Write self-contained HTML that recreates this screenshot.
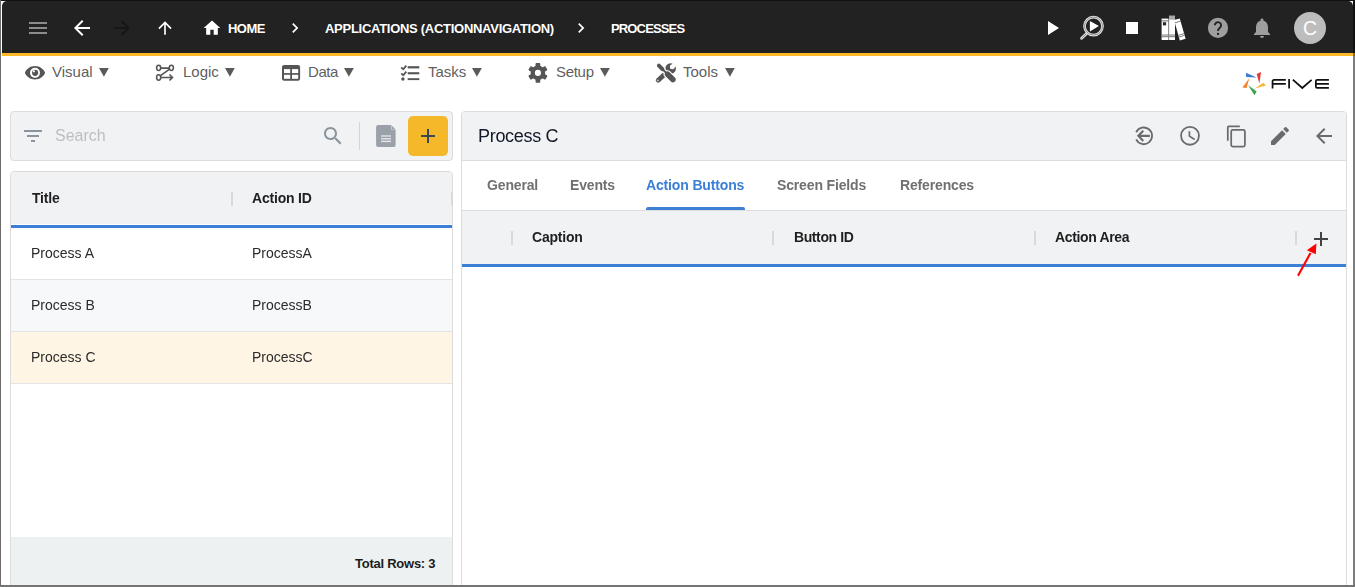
<!DOCTYPE html>
<html><head><meta charset="utf-8">
<style>
*{box-sizing:border-box;margin:0;padding:0}
html,body{width:1355px;height:587px;overflow:hidden;background:#fff;font-family:"Liberation Sans",sans-serif}
.a{position:absolute}
svg{position:absolute;overflow:visible}
.hdr{left:2px;top:1px;width:1351px;height:52px;background:#222;border-radius:5px 5px 0 0}
.org{left:2px;top:53px;width:1351px;height:3px;background:#fbb928}
.crumb{color:#fff;font-weight:bold;font-size:13px;top:22px;line-height:14px;white-space:nowrap}
.menu{color:#5f5f5f;font-size:15px;top:64px;line-height:16px;white-space:nowrap}
.tri{color:#5f5f5f;font-size:11px}
.panel{background:#fff;border:1px solid #dcdcdc;border-radius:4px}
.gs{will-change:transform}
.th{font-weight:bold;font-size:14px;color:#1f1f1f;line-height:16px;white-space:nowrap;letter-spacing:-0.2px}
.td{font-size:14px;color:#2b2b2b;line-height:16px;white-space:nowrap}
.tab{font-weight:bold;font-size:14px;color:#707070;line-height:16px;white-space:nowrap;letter-spacing:-0.15px;top:177.4px}
.dv{width:2px;background:#dadada}
</style></head><body>

<!-- HEADER -->
<div class="a hdr"></div>
<div class="a org"></div>


<!-- header content -->
<svg class="a" style="left:0;top:0" width="60" height="53"><rect x="29" y="22" width="18" height="2" fill="#8c8c8c"/><rect x="29" y="27" width="18" height="2" fill="#8c8c8c"/><rect x="29" y="32" width="18" height="2" fill="#8c8c8c"/></svg>
<svg class="a" style="left:70px;top:16px" width="24" height="24" viewBox="0 0 24 24"><path fill="#fff" d="M20 11H7.83l5.59-5.59L12 4l-8 8 8 8 1.41-1.41L7.83 13H20v-2z"/></svg>
<svg class="a" style="left:110px;top:16px" width="24" height="24" viewBox="0 0 24 24"><path fill="#161616" d="M12 4l-1.41 1.41L16.17 11H4v2h12.17l-5.58 5.59L12 20l8-8z"/></svg>
<svg class="a" style="left:155px;top:18px" width="20" height="20" viewBox="0 0 24 24"><path fill="#fff" d="M4 12l1.41 1.41L11 7.83V20h2V7.83l5.58 5.59L20 12l-8-8-8 8z"/></svg>
<svg class="a" style="left:202px;top:18px" width="20" height="20" viewBox="0 0 24 24"><path fill="#fff" d="M10 20v-6h4v6h5v-8h3L12 3 2 12h3v8z"/></svg>
<div class="a crumb" id="c1" style="left:228px;letter-spacing:-0.55px">HOME</div>
<svg class="a" style="left:285px;top:18px" width="20" height="20" viewBox="0 0 24 24"><path fill="#fff" d="M10 6L8.59 7.41 13.17 12l-4.58 4.59L10 18l6-6z"/></svg>
<div class="a crumb" id="c2" style="left:325px;letter-spacing:-0.28px">APPLICATIONS (ACTIONNAVIGATION)</div>
<svg class="a" style="left:571px;top:18px" width="20" height="20" viewBox="0 0 24 24"><path fill="#fff" d="M10 6L8.59 7.41 13.17 12l-4.58 4.59L10 18l6-6z"/></svg>
<div class="a crumb" id="c3" style="left:611px;letter-spacing:-0.85px">PROCESSES</div>

<svg class="a" style="left:1040px;top:16px" width="24" height="24" viewBox="0 0 24 24"><path fill="#fff" d="M8 5v14l11-7z"/></svg>
<svg class="a" style="left:1075px;top:12px" width="32" height="32"><path d="M6.6 26.2L11.9 21.2" stroke="#e6e6e6" stroke-width="2.9" stroke-linecap="round"/><path d="M6.6 26.2L11.9 21.2" stroke="#777" stroke-width="0.9" stroke-linecap="round"/><circle cx="18.5" cy="14.1" r="9" fill="none" stroke="#e6e6e6" stroke-width="2.7"/><circle cx="18.5" cy="14.1" r="9" fill="none" stroke="#7a7a7a" stroke-width="0.8"/><path d="M14.9 9L23.9 14.1 14.9 19.5z" fill="#fff"/></svg>
<div class="a" style="left:1126px;top:22px;width:12px;height:12px;background:#fff"></div>
<svg class="a" style="left:1160px;top:15px" width="28" height="27" viewBox="0 0 28 27">
<rect x="1.6" y="3.6" width="6.9" height="21.4" fill="#fff"/>
<rect x="2.9" y="7.2" width="3.2" height="3.2" fill="#2a2a2a"/>
<rect x="1.6" y="5.5" width="6.9" height="0.8" fill="#444"/>
<rect x="1.6" y="19.6" width="6.9" height="0.9" fill="#666"/>
<rect x="1.6" y="21.3" width="6.9" height="0.9" fill="#666"/>
<rect x="9.1" y="0.8" width="5.9" height="24.2" fill="#fff"/>
<rect x="9.1" y="0.8" width="5.9" height="3.9" fill="#a8a8a8"/>
<rect x="9.1" y="19.6" width="5.9" height="0.9" fill="#666"/>
<rect x="9.1" y="21.3" width="5.9" height="0.9" fill="#666"/>
<g transform="rotate(-16 20 14)"><rect x="16.7" y="3.8" width="6" height="21.1" fill="#fff"/><rect x="16.7" y="6.2" width="6" height="0.9" fill="#666"/><rect x="16.7" y="19.2" width="6" height="0.9" fill="#666"/><rect x="16.7" y="21" width="6" height="0.9" fill="#666"/></g>
</svg>
<svg class="a" style="left:1206px;top:16px" width="24" height="24"><circle cx="12" cy="11.9" r="10.1" fill="#9e9e9e"/><path d="M8.9 9.3a3.1 3.1 0 1 1 4.9 2.5c-1.1.8-1.8 1.4-1.8 3.3" fill="none" stroke="#222" stroke-width="1.9"/><rect x="11" y="16.9" width="2" height="2" fill="#222"/></svg>
<svg class="a" style="left:1250px;top:15.5px" width="24" height="24" viewBox="0 0 24 24"><path fill="#9e9e9e" d="M12 22c1.1 0 2-.9 2-2h-4c0 1.1.89 2 2 2zm6-6v-5c0-3.07-1.64-5.64-4.5-6.32V4c0-.83-.67-1.5-1.5-1.5s-1.5.67-1.5 1.5v.68C7.63 5.36 6 7.92 6 11v5l-2 2v1h16v-1l-2-2z"/></svg>
<div class="a" style="left:1294px;top:12px;width:32px;height:32px;border-radius:50%;background:#bdbdbd;color:#fff;font-size:19.5px;line-height:32px;text-align:center">C</div>


<!-- toolbar -->
<svg class="a" style="left:23px;top:61px" width="24" height="24" viewBox="0 0 24 24"><path fill="#555" fill-rule="evenodd" d="M12 5.1C7.3 5.1 3.4 8 1.9 11.85 3.4 15.7 7.3 18.6 12 18.6s8.6-2.9 10.1-6.75C20.6 8 16.7 5.1 12 5.1zM12 16.85a5 5 0 1 1 0-10 5 5 0 0 1 0 10z"/><circle cx="12.1" cy="11.85" r="3.1" fill="#555"/><circle cx="10.9" cy="10.3" r="1.1" fill="#fff"/></svg>
<div class="a menu" id="m1" style="left:52px">Visual</div>
<svg class="a" style="left:99px;top:68px" width="11" height="10"><path d="M0 0H9.8L4.9 8.7z" fill="#5a5a5a"/></svg>

<svg class="a" style="left:150px;top:60px" width="30" height="26" fill="none" stroke="#555" stroke-width="1.55"><ellipse cx="8.65" cy="7.85" rx="2.05" ry="2.7"/><ellipse cx="21.35" cy="7.85" rx="2.05" ry="2.7"/><ellipse cx="8.65" cy="17.5" rx="2.05" ry="2.7"/><path d="M10.5 8.1H19.5M10.6 15.6L19.2 9.4M10.5 17.4H22.4M19.5 14.5L22.5 17.4 19.5 20.5"/></svg>
<div class="a menu" id="m2" style="left:183px">Logic</div>
<svg class="a" style="left:224.5px;top:68px" width="11" height="10"><path d="M0 0H9.8L4.9 8.7z" fill="#5a5a5a"/></svg>

<svg class="a" style="left:276px;top:60px" width="30" height="26"><rect x="6" y="4.9" width="18.1" height="15.9" rx="2.2" fill="#555"/><rect x="8" y="9.1" width="6.2" height="4" fill="#fff"/><rect x="16" y="9.1" width="6.2" height="4" fill="#fff"/><rect x="8" y="14.8" width="6.2" height="4" fill="#fff"/><rect x="16" y="14.8" width="6.2" height="4" fill="#fff"/></svg>
<div class="a menu" id="m3" style="left:308px;letter-spacing:-0.45px">Data</div>
<svg class="a" style="left:344px;top:68px" width="11" height="10"><path d="M0 0H9.8L4.9 8.7z" fill="#5a5a5a"/></svg>

<svg class="a" style="left:396px;top:60px" width="30" height="26"><path d="M5.2 7.3L7.3 9.3 10.3 5.6M5.2 13.3L7.3 15.3 10.3 11.6" fill="none" stroke="#555" stroke-width="1.8"/><circle cx="6.9" cy="19" r="1.7" fill="#555"/><rect x="11.7" y="6.2" width="11.6" height="2.2" fill="#555"/><rect x="11.7" y="12.2" width="11.6" height="2.1" fill="#555"/><rect x="11.7" y="18.2" width="11.6" height="1.9" fill="#555"/></svg>
<div class="a menu" id="m4" style="left:428px">Tasks</div>
<svg class="a" style="left:472px;top:68px" width="11" height="10"><path d="M0 0H9.8L4.9 8.7z" fill="#5a5a5a"/></svg>

<svg class="a" style="left:524px;top:60px" width="30" height="26"><g transform="translate(13.9 12.9)" fill="#555"><circle r="7.3"/><rect x="-2.35" y="-9.8" width="4.7" height="19.6" rx="0.8"/><rect x="-2.35" y="-9.8" width="4.7" height="19.6" rx="0.8" transform="rotate(60)"/><rect x="-2.35" y="-9.8" width="4.7" height="19.6" rx="0.8" transform="rotate(120)"/><circle r="3.05" fill="#fff"/></g></svg>
<div class="a menu" id="m5" style="left:556px;letter-spacing:-0.3px">Setup</div>
<svg class="a" style="left:599.5px;top:68px" width="11" height="10"><path d="M0 0H9.8L4.9 8.7z" fill="#5a5a5a"/></svg>

<svg class="a" style="left:652px;top:60px" width="30" height="26"><g stroke-linecap="round"><path d="M16.8 10.4L6.2 20.2" stroke="#555" stroke-width="4.8"/><circle cx="18.6" cy="8.5" r="5.3" fill="#555"/><circle cx="20.2" cy="6.9" r="2.4" fill="#fff"/><path d="M20.2 6.9L24.5 2.6" stroke="#fff" stroke-width="4.2" stroke-linecap="butt"/><path d="M6.9 5.6L10.4 9.1" stroke="#fff" stroke-width="6.2"/><path d="M9.8 8.5L15.2 13.9" stroke="#fff" stroke-width="4.2" stroke-linecap="butt"/><path d="M15.6 14.3L20.9 19.6" stroke="#fff" stroke-width="7.8"/><path d="M6.9 5.6L10.4 9.1" stroke="#555" stroke-width="4"/><path d="M9.8 8.5L15.2 13.9" stroke="#555" stroke-width="2" stroke-linecap="butt"/><path d="M15.6 14.3L20.9 19.6" stroke="#555" stroke-width="5.6"/><path d="M16.8 10.4L13.6 13.4" stroke="#fff" stroke-width="0" /></g><circle cx="5.9" cy="20.4" r="0.9" fill="#ccc"/></svg>
<div class="a menu" id="m6" style="left:683px">Tools</div>
<svg class="a" style="left:725px;top:68px" width="11" height="10"><path d="M0 0H9.8L4.9 8.7z" fill="#5a5a5a"/></svg>

<!-- FIVE logo -->
<svg class="a" style="left:1235px;top:65px" width="105" height="35">
<path d="M10.9 7.8L11.2 12 21.7 12.4z" fill="#3b7bd8"/>
<path d="M21.7 8.9L26 7 24.4 18.6z" fill="#e03a3a"/>
<path d="M19.8 23.6L28.3 17.8 31 20.5z" fill="#f5b82e"/>
<path d="M13.2 20.2L21.7 26.4 19.4 30.2z" fill="#3ea54f"/>
<path d="M14.3 13.2L7.4 22.5 11.6 22.9z" fill="#f5832a"/>
<g fill="none" stroke="#111" stroke-width="1.75">
<path d="M37.55 23.6V16.3a1.35 1.35 0 0 1 1.35-1.35H50.8M37.55 18.85H50.8"/>
<path d="M54.1 14.1V23.6M57.8 14.6L67.3 23 76.6 14.8"/>
<path d="M93.9 14.95H82.2a1.35 1.35 0 0 0-1.35 1.35V21.4a1.35 1.35 0 0 0 1.35 1.35H93.9M80.85 18.85H93.9"/>
</g>
</svg>


<!-- LEFT: search -->
<div class="a" style="left:10px;top:111px;width:443px;height:50px;background:#f1f2f4;border:1px solid #dcdcdc;border-radius:4px"></div>
<svg class="a" style="left:21px;top:124px" width="24" height="24" viewBox="0 0 24 24"><path fill="#8b949c" d="M10 18h4v-2h-4v2zM3 6v2h18V6H3zm3 7h12v-2H6v2z"/></svg>
<div class="a gs" id="s1" style="left:55px;top:127px;font-size:16px;line-height:18px;color:#bcbec1">Search</div>
<svg class="a" style="left:321px;top:124px" width="24" height="24" viewBox="0 0 24 24"><path fill="#8b949c" d="M15.5 14h-.79l-.28-.27C15.41 12.59 16 11.11 16 9.5 16 5.91 13.09 3 9.5 3S3 5.91 3 9.5 5.91 16 9.5 16c1.61 0 3.09-.59 4.23-1.57l.27.28v.79l5 4.99L20.49 19l-4.99-5zm-6 0C7.01 14 5 11.99 5 9.5S7.01 5 9.5 5 14 7.01 14 9.5 11.99 14 9.5 14z"/></svg>
<div class="a" style="left:359px;top:122px;width:1px;height:28px;background:#d3d5d8"></div>
<svg class="a" style="left:370px;top:120px" width="32" height="32"><path d="M8.3 5H21L25.6 9.6V24.9a2.2 2.2 0 0 1-2.2 2.2H8.3a2.2 2.2 0 0 1-2.2-2.2V7.2A2.2 2.2 0 0 1 8.3 5z" fill="#9aa1a8"/><path d="M21.2 5.2L25.6 9.6H21.2z" fill="#f1f2f4"/><path d="M21.6 5.6L25.2 9.2H21.6z" fill="#9aa1a8"/><rect x="11" y="15.3" width="10" height="1.4" fill="#e4e6e9"/><rect x="11" y="18.1" width="10" height="1.4" fill="#e4e6e9"/><rect x="11" y="20.7" width="10" height="1.4" fill="#e4e6e9"/></svg>
<div class="a" style="left:408px;top:116px;width:40px;height:40px;background:#f6b82b;border-radius:5px"></div>
<svg class="a" style="left:408px;top:116px" width="40" height="40"><path d="M13 20H27M20 13V27" stroke="#3e4652" stroke-width="2"/></svg>

<!-- LEFT: table -->
<div class="a" style="left:10px;top:171px;width:443px;height:420px;background:#fff;border:1px solid #dcdcdc;border-radius:4px;overflow:hidden">
  <div class="a" style="left:0;top:0;width:441px;height:52px;background:#f1f2f4"></div>
  <div class="a" style="left:0;top:53px;width:441px;height:3px;background:#3b7fd6"></div>
  <div class="a" style="left:0;top:107px;width:441px;height:1px;background:#e3e4e6"></div>
  <div class="a" style="left:0;top:108px;width:441px;height:51px;background:#f7f8fa"></div>
  <div class="a" style="left:0;top:159px;width:441px;height:1px;background:#e3e4e6"></div>
  <div class="a" style="left:0;top:160px;width:441px;height:51px;background:#fff5e5"></div>
  <div class="a" style="left:0;top:211px;width:441px;height:1px;background:#e3e4e6"></div>
  <div class="a" style="left:0;top:365px;width:441px;height:60px;background:#eef1f2"></div>
</div>
<div class="a dv" style="left:231px;top:192px;height:14px"></div>
<div class="a dv" style="left:451px;top:192px;height:14px"></div>
<div class="a th gs" id="t1" style="left:32px;top:190px">Title</div>
<div class="a th gs" id="t2" style="left:252px;top:190px">Action ID</div>
<div class="a td gs" id="r1" style="left:31px;top:245px">Process A</div>
<div class="a td gs" id="r2" style="left:252px;top:245px">ProcessA</div>
<div class="a td gs" style="left:31px;top:297px">Process B</div>
<div class="a td gs" style="left:252px;top:297px">ProcessB</div>
<div class="a td gs" style="left:31px;top:349px">Process C</div>
<div class="a td gs" style="left:252px;top:349px">ProcessC</div>
<div class="a th" id="tot" style="left:355px;top:556px;font-size:13px;letter-spacing:-0.25px;color:#1c1c1c">Total Rows: 3</div>

<!-- RIGHT panel -->
<div class="a" style="left:461px;top:111px;width:886px;height:480px;background:#fff;border:1px solid #dcdcdc;border-radius:4px;overflow:hidden">
  <div class="a" style="left:0;top:0;width:884px;height:48px;background:#f1f2f4"></div>
  <div class="a" style="left:0;top:48px;width:884px;height:1px;background:#dcdcdc"></div>
  <div class="a" style="left:0;top:98px;width:884px;height:1px;background:#dcdcdc"></div>
  <div class="a" style="left:0;top:99px;width:884px;height:53px;background:#f1f2f4"></div>
  <div class="a" style="left:0;top:152px;width:884px;height:3px;background:#3b7fd6"></div>
</div>
<div class="a gs" id="pt" style="left:478px;top:126px;font-size:18px;line-height:20px;color:#111827;letter-spacing:-0.3px">Process C</div>
<svg class="a" style="left:1131px;top:123px" width="26" height="26"><path d="M5.17 9.25A8.35 8.35 0 1 1 5.17 16.45" fill="none" stroke="#6b6b6b" stroke-width="1.8"/><path d="M18.9 12.85H7.6M12.3 7.8L7.3 12.85 12.3 17.9" fill="none" stroke="#6b6b6b" stroke-width="2.1"/></svg>
<svg class="a" style="left:1177px;top:123px" width="26" height="26"><circle cx="13" cy="12.8" r="8.95" fill="none" stroke="#6b6b6b" stroke-width="1.8"/><path d="M12.4 8.2V13.1L17.6 16.5" fill="none" stroke="#6b6b6b" stroke-width="1.7"/></svg>
<svg class="a" style="left:1222px;top:122px" width="28" height="28"><path d="M5.8 18.7V5.3a1 1 0 0 1 1-1H17.8" fill="none" stroke="#6b6b6b" stroke-width="1.75"/><rect x="9.2" y="7.9" width="13.7" height="16.7" rx="1.6" fill="none" stroke="#6b6b6b" stroke-width="1.75"/></svg>
<svg class="a" style="left:1268px;top:124px" width="24" height="24" viewBox="0 0 24 24"><path fill="#6b6b6b" d="M3 17.25V21h3.75L17.81 9.94l-3.75-3.75L3 17.25zM20.71 7.04c.39-.39.39-1.02 0-1.41l-2.34-2.34c-.39-.39-1.02-.39-1.41 0l-1.83 1.83 3.75 3.75 1.83-1.83z"/></svg>
<svg class="a" style="left:1312.4px;top:124.3px" width="24" height="24" viewBox="0 0 24 24"><path fill="#6b6b6b" d="M20 11H7.83l5.59-5.59L12 4l-8 8 8 8 1.41-1.41L7.83 13H20v-2z"/></svg>

<div class="a tab gs" id="g1" style="left:487px">General</div>
<div class="a tab gs" id="g2" style="left:570px">Events</div>
<div class="a tab gs" id="g3" style="left:646px;color:#3b7fd6">Action Buttons</div>
<div class="a tab gs" id="g4" style="left:777px">Screen Fields</div>
<div class="a tab gs" id="g5" style="left:900px">References</div>
<div class="a" style="left:646px;top:207px;width:99px;height:3px;background:#3b7fd6;border-radius:2px 2px 0 0"></div>

<div class="a dv" style="left:511px;top:231px;height:14px"></div>
<div class="a dv" style="left:772px;top:231px;height:14px"></div>
<div class="a dv" style="left:1034px;top:231px;height:14px"></div>
<div class="a dv" style="left:1295px;top:231px;height:14px"></div>
<div class="a th gs" id="h1" style="left:532px;top:229px">Caption</div>
<div class="a th gs" id="h2" style="left:794px;top:229px;letter-spacing:-0.4px">Button ID</div>
<div class="a th gs" id="h3" style="left:1055px;top:229px;letter-spacing:-0.35px">Action Area</div>
<svg class="a" style="left:1310px;top:228px" width="22" height="22"><path d="M4 11H18M11 4V18" stroke="#444" stroke-width="2"/></svg>
<svg class="a" style="left:1290px;top:236px" width="35" height="45"><path d="M8 39.8L20.5 17" stroke="#f00" stroke-width="2.1"/><path d="M26.4 7.6L16.8 14.2 25.8 18.3z" fill="#f00"/></svg>

<!-- frame overlays -->
<div class="a" style="left:0;top:0;width:1355px;height:1px;background:#111"></div>
<div class="a" style="left:0;top:0;width:1px;height:587px;background:#6b6b6b"></div>
<div class="a" style="left:1353px;top:0;width:2px;height:53px;background:#111"></div>
<div class="a" style="left:1353px;top:53px;width:2px;height:3px;background:#8a6a1a"></div>
<div class="a" style="left:1353px;top:56px;width:2px;height:531px;background:#7d7d7d"></div>
<div class="a" style="left:0;top:585px;width:1355px;height:2px;background:#747474"></div>

</body></html>
